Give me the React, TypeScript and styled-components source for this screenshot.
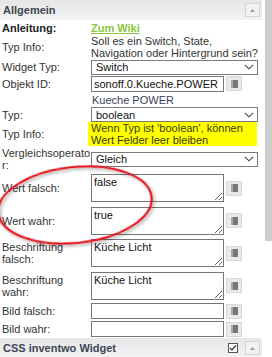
import React from 'react';
import styled, { createGlobalStyle } from 'styled-components';

const GlobalStyle = createGlobalStyle`
    html, body {
        margin: 0;
        padding: 0;
        background: #fff;
    }
    body {
        font-family: "Liberation Sans", Arial, sans-serif;
        font-size: 11px;
        color: #333;
    }
`;

const Page = styled.div`
    position: relative;
    display: flex;
    width: 272px;
    height: 357px;
    overflow: hidden;
`;

const Panel = styled.div`
    width: 262px;
    flex: none;
`;

const ScrollTrack = styled.div`
    flex: 1;
    padding-left: 3px;
`;

const ScrollThumb = styled.div`
    height: 241px;
    background: #cdcdcd;
`;

const GroupHeader = styled.div`
    display: flex;
    align-items: center;
    height: 20px;
    padding: 0 2px 0 3px;
    background: linear-gradient(to bottom, #e6e6e6, #f3f3f3);
    font-weight: bold;
    color: #3d4654;
`;

const HeaderTitle = styled.span`
    flex: 1;
`;

const CollapseButton = styled.div`
    width: 15px;
    height: 14px;
    box-sizing: border-box;
    border: 1px solid #d4d4d4;
    background: #f2f2f2;
    display: flex;
    align-items: center;
    justify-content: center;
`;

const CheckBox = styled.div`
    width: 10px;
    height: 10px;
    box-sizing: border-box;
    border: 1px solid #555;
    background: #fff;
    margin-right: 7px;
    display: flex;
    align-items: center;
    justify-content: center;
`;

const Row = styled.div<{ $h: number }>`
    display: flex;
    align-items: center;
    height: ${p => p.$h}px;
`;

const Label = styled.div<{ $bold?: boolean }>`
    width: 91px;
    box-sizing: border-box;
    padding-left: 2px;
    flex: none;
    line-height: 12px;
    overflow-wrap: anywhere;
    font-weight: ${p => (p.$bold ? 'bold' : 'normal')};
    color: ${p => (p.$bold ? '#222' : '#333')};
`;

const Value = styled.div`
    flex: 1;
    min-width: 0;
    display: flex;
    align-items: center;
    gap: 2px;
    line-height: 12px;
`;

const WikiLink = styled.a`
    color: #8cc63e;
    font-weight: bold;
    text-decoration: underline;
`;

const InfoText = styled.div`
    color: #333;
`;

const ObjectName = styled.div`
    padding-left: 1px;
    color: #3a4060;
`;

const Hint = styled.div`
    margin-left: -3px;
    width: 169px;
    box-sizing: border-box;
    padding-left: 3px;
    background: #ffff00;
    color: #3a3a1a;
`;

const SelectBox = styled.div`
    display: flex;
    align-items: center;
    justify-content: space-between;
    width: 167px;
    height: 15px;
    box-sizing: border-box;
    border: 1px solid #7a7a7a;
    padding: 0 3px 0 4px;
    background: #fff;
    color: #111;
`;

const TextInput = styled.input`
    width: 133px;
    height: 16px;
    box-sizing: border-box;
    border: 1px solid #767676;
    padding: 0 2px;
    margin: 0;
    font: inherit;
    color: #111;
    background: #fff;
    outline: none;
`;

const TextArea = styled.textarea`
    display: block;
    width: 133px;
    height: 28px;
    box-sizing: border-box;
    border: 1px solid #767676;
    padding: 1px 2px;
    margin: 0;
    font: inherit;
    line-height: 13px;
    color: #111;
    background: #fff;
    resize: both;
    outline: none;
`;

const SideButton = styled.div`
    width: 16px;
    height: 15px;
    box-sizing: border-box;
    border: 1px solid #d8d8d8;
    background: #e9e9e9;
    display: flex;
    align-items: center;
    justify-content: center;
    flex: none;
`;

const Annotation = styled.svg`
    position: absolute;
    left: 0;
    top: 0;
    pointer-events: none;
`;

const Chevron = () => (
    <svg width="10" height="6" viewBox="0 0 10 6">
        <path d="M0.8 0.8 L5 4.8 L9.2 0.8" fill="none" stroke="#444" strokeWidth="1.1" />
    </svg>
);

const UpArrow = () => (
    <svg width="5" height="3" viewBox="0 0 5 3">
        <path d="M0 3 L2.5 0 L5 3 Z" fill="#9a9a9a" />
    </svg>
);

const CheckMark = () => (
    <svg width="8" height="8" viewBox="0 0 8 8">
        <path d="M1 4 L3 6 L7 1.5" fill="none" stroke="#333" strokeWidth="1.2" />
    </svg>
);

const NoteIcon = () => (
    <svg width="7" height="8" viewBox="0 0 7 8">
        <rect x="0" y="0" width="2" height="8" fill="#a8a8a8" />
        <rect x="2" y="0" width="5" height="8" fill="#777" />
    </svg>
);

const Select: React.FC<{ value: string }> = ({ value }) => (
    <SelectBox>
        <span>{value}</span>
        <Chevron />
    </SelectBox>
);

const InputField: React.FC<{ value?: string }> = ({ value = '' }) => (
    <>
        <TextInput readOnly value={value} />
        <SideButton><NoteIcon /></SideButton>
    </>
);

const AreaField: React.FC<{ value: string }> = ({ value }) => (
    <>
        <TextArea readOnly value={value} />
        <SideButton><NoteIcon /></SideButton>
    </>
);

export default function App() {
    return (
        <Page>
            <GlobalStyle />
            <Panel>
                <GroupHeader>
                    <HeaderTitle>Allgemein</HeaderTitle>
                    <CollapseButton><UpArrow /></CollapseButton>
                </GroupHeader>

                <Row $h={15}>
                    <Label $bold>Anleitung:</Label>
                    <Value><WikiLink>Zum Wiki</WikiLink></Value>
                </Row>
                <Row $h={24}>
                    <Label>Typ Info:</Label>
                    <Value>
                        <InfoText>Soll es ein Switch, State,<br />Navigation oder Hintergrund sein?</InfoText>
                    </Value>
                </Row>
                <Row $h={16}>
                    <Label>Widget Typ:</Label>
                    <Value><Select value="Switch" /></Value>
                </Row>
                <Row $h={17}>
                    <Label>Objekt ID:</Label>
                    <Value><InputField value="sonoff.0.Kueche.POWER" /></Value>
                </Row>
                <Row $h={15}>
                    <Label />
                    <Value><ObjectName>Kueche POWER</ObjectName></Value>
                </Row>
                <Row $h={15}>
                    <Label>Typ:</Label>
                    <Value><Select value="boolean" /></Value>
                </Row>
                <Row $h={24}>
                    <Label>Typ Info:</Label>
                    <Value>
                        <Hint>Wenn Typ ist 'boolean', können<br />Wert Felder leer bleiben</Hint>
                    </Value>
                </Row>
                <Row $h={26}>
                    <Label>Vergleichsoperator:</Label>
                    <Value><Select value="Gleich" /></Value>
                </Row>
                <Row $h={32}>
                    <Label>Wert falsch:</Label>
                    <Value><AreaField value="false" /></Value>
                </Row>
                <Row $h={33}>
                    <Label>Wert wahr:</Label>
                    <Value><AreaField value="true" /></Value>
                </Row>
                <Row $h={32}>
                    <Label>Beschriftung falsch:</Label>
                    <Value><AreaField value="Küche Licht" /></Value>
                </Row>
                <Row $h={33}>
                    <Label>Beschriftung wahr:</Label>
                    <Value><AreaField value="Küche Licht" /></Value>
                </Row>
                <Row $h={18}>
                    <Label>Bild falsch:</Label>
                    <Value><InputField /></Value>
                </Row>
                <Row $h={18}>
                    <Label>Bild wahr:</Label>
                    <Value><InputField /></Value>
                </Row>

                <GroupHeader>
                    <HeaderTitle>CSS inventwo Widget</HeaderTitle>
                    <CheckBox><CheckMark /></CheckBox>
                    <CollapseButton><UpArrow /></CollapseButton>
                </GroupHeader>
            </Panel>
            <ScrollTrack>
                <ScrollThumb />
            </ScrollTrack>

            <Annotation width="272" height="357" viewBox="0 0 272 357">
                <defs>
                    <filter id="shadow" x="-10%" y="-20%" width="130%" height="150%">
                        <feDropShadow dx="1.5" dy="2" stdDeviation="1.5" floodColor="#000" floodOpacity="0.35" />
                    </filter>
                </defs>
                <ellipse
                    cx="75"
                    cy="205"
                    rx="77"
                    ry="38"
                    transform="rotate(-6 75 205)"
                    fill="none"
                    stroke="#e3141b"
                    strokeWidth="2.2"
                    filter="url(#shadow)"
                />
            </Annotation>
        </Page>
    );
}
